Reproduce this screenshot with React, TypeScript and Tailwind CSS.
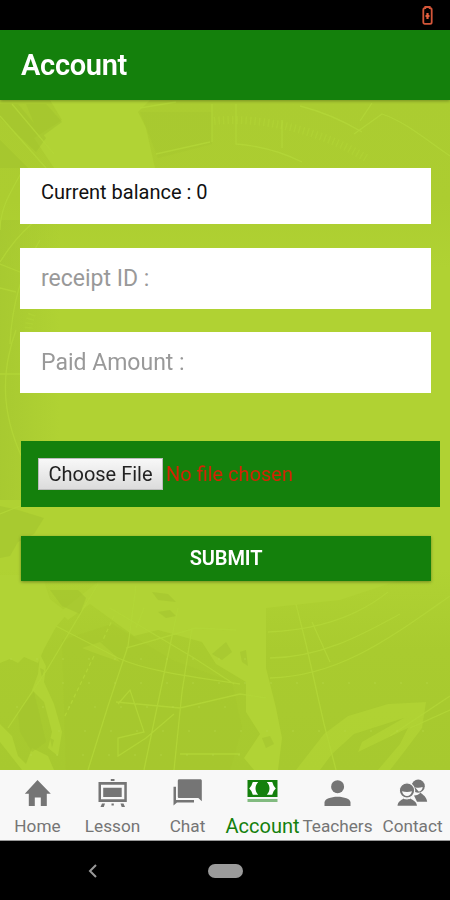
import type { ReactNode } from "react";

function Backdrop() {
    return (
        <svg
            className="absolute inset-0 w-full h-full"
            viewBox="0 100 450 670"
            preserveAspectRatio="none"
            fill="none"
            aria-hidden="true"
        >
            <defs>
                <linearGradient id="base" x1="0" y1="0" x2="0" y2="1">
                    <stop offset="0" stopColor="#abcc31" />
                    <stop offset="0.15" stopColor="#accd30" />
                    <stop offset="0.25" stopColor="#b0d233" />
                    <stop offset="0.7" stopColor="#b0d233" />
                    <stop offset="0.82" stopColor="#a9cb2f" />
                    <stop offset="1" stopColor="#a7c92f" />
                </linearGradient>
                <linearGradient id="edge" x1="0" y1="0" x2="1" y2="0">
                    <stop offset="0" stopColor="#a4c630" stopOpacity="0.7" />
                    <stop offset="1" stopColor="#a4c630" stopOpacity="0" />
                </linearGradient>
            </defs>
            <rect y="100" width="450" height="670" fill="url(#base)" />
            <rect y="220" width="60" height="280" fill="url(#edge)" />

            <g fill="#b1d335">
                <path d="M50 100H150L138 112l8 16 9 40H54L34 138l28-18z" />
                <path d="M0 575h42l8 24 18 14-12 14-12 22-6 14-14-6-6 6-8-4-10 4z" />
                <path d="M100 580h300l-60 20-74 8v60l10 40 6 30-4 32h-24l-10-12 16-24-14-22v-30l-30-18-14-22-44-12-24 6-44-32-22 16-8-8z" />
                <path d="M82 648l18-6 16 14 4 6-28-10zM40 654l6 12-2 16 10 22 8 28-4 24-10-8 4-16-8-30-12-12 6-16zM0 724l12 12 6 20 8 8 6-16 16 8 6 14H22L0 742z" />
                <path d="M324 734l24-18 40-12 38-2-4 26-18 24-14 18h-12l22-26 8-16-50 24 4-10 42-24-50 16-22 20-12 16h-24z" opacity="0.8" />
            </g>

            <g fill="#a2c42f" opacity="0.55">
                <path d="M0 104h18l28 34-10 14L0 118zM26 104h20l16 18-22 16zM0 140l28 28H0z" />
                <path d="M0 506l18 4 26 8-10 16-16 8-8 14-10 2zM50 590l28 0 8 8-6 16-18-8zM18 712l16-20 12 50-14 10-12-20z" />
                <path d="M140 112h72v32l-54 14z" opacity="0.4" />
                <path d="M152 592l16 2 8 8-18-2zM158 612l12-2 6 6-10 2zM212 654l14-12 6 10-10 8zM240 652l6-2 2 16-6-4zM262 738l8-2 4 8-8 4zM50 738l4 2-2 8zM40 668l4 2-2 8z" />
                <path d="M62 640l50-16 60 36 60 22 10 46-12 42H66z" opacity="0.35" />
            </g>

            <g stroke="#b3d638" strokeWidth="1.300" opacity="0.85">
                <path d="M0 116l46 52M12 104l42 50M140 108l36-6M156 154l54-12M212 104v38M236 104v40c25 2 46 8 66 18M300 106c24 6 42 14 62 26M354 134l28-20c24 8 44 26 68 42M282 120v28M372 103l-12 18" />
                <path d="M0 262C20 230 40 214 70 200M24 168C8 196 0 210 0 230M40 240c-18 30-28 62-30 104M0 264l20 8M0 288l16 4M0 374h20M16 330c-18 50-12 92 10 136M0 514l20-8" />
                <path d="M98 584L48 668 8 728M136 586l-8 60-20 60-20 64M144 608l-8 20M178 608l-14 66-20 96M192 628l-10 64-8 78M56 626l62 32c30 14 84 20 122 26M110 608l84 50 40 26M126 648l70-20 40 2M116 702l64 6 60-14 26 4M118 704l12-14 14 42-26 6 0 18 28-18 28-24" />
                <path d="M296 604l10 40 18 80 12 46M312 622l18 40M268 632c50-2 90-16 120-40M270 658c54 0 100-28 130-44M270 678c70-2 120-40 180-82M180 754h60M390 736l60-40M410 728l40-18" />
                <path d="M94 656L64 718M114 616l-12 26" strokeDasharray="4 3" />
            </g>
            <path
                d="M214 121C260 116 320 130 366 158M32 314C26 330 28 342 34 370"
                stroke="#b3d638"
                strokeWidth="8"
                strokeDasharray="1.500 3"
                opacity="0.45"
            />
            <g stroke="#b9da4a" strokeWidth="1.500" strokeDasharray="2 24" opacity="0.4">
                <path d="M10 659h250M62 683h370M16 707h230M58 731h380M30 755h230" />
            </g>
        </svg>
    );
}

function TabIcon({ children }: { children: ReactNode }) {
    return (
        <svg className="mt-2 shrink-0" width="31" height="31" viewBox="0 0 31 31" fill="currentColor">
            {children}
        </svg>
    );
}

const tabs = [
    {
        name: "Home",
        icon: <path d="M15.5 2 28.8 15.7h-4V28h-6v-8.5h-6V28h-6V15.7h-4z" />,
    },
    {
        name: "Lesson",
        icon: (
            <>
                <path d="M1.5 4h28.3v20H1.5zM4 6.8v14.4h23.3V6.8z" fillRule="evenodd" />
                <path d="M6.2 9.7h18.5V19H6.2zM13.8 1h3.7v2h-3.7zM5 25.5h3L6.8 29H3.5zM23.5 25.5h3l1.5 3.5h-3.3zM14.5 25.5h2.3v2h-2.3z" />
            </>
        ),
    },
    {
        name: "Chat",
        icon: (
            <>
                <path d="M7.300 1.300h21c1 0 1.500.6 1.500 1.500v20.500L26.300 20h-19c-1 0-1.500-.5-1.500-1.500V2.800c0-.9.500-1.500 1.500-1.500z" />
                <path d="M1.500 8.700h2.500V22h18v2.500H5L1.500 27.500z" />
            </>
        ),
    },
    {
        name: "Account",
        icon: (
            <>
                <path d="M.5 2h30v17H.5z" />
                <path d="M5.800 4h5.400c-3.600 3.500-3.600 9.200 0 12.700H5.800L4.300 13 2.200 10.400 4.300 7.700zM25.200 4h-5.400c3.600 3.500 3.600 9.200 0 12.700h5.400l1.500-3.700 2.100-2.600-2.100-2.700z" fill="#fff" />
                <path d="M.5 21h30v3H.5z" fill="#82bb80" />
            </>
        ),
    },
    {
        name: "Teachers",
        icon: (
            <>
                <circle cx="15.6" cy="8.7" r="6.5" />
                <path d="M2.5 28v-3.5c0-3.5 6.500-5.700 13-5.700s13 2.200 13 5.700V28z" />
            </>
        ),
    },
    {
        name: "Contact",
        icon: (
            <>
                <circle cx="21.2" cy="8.2" r="6.6" />
                <path d="M17 17.500c3 0 5-1 6.500-3 2.500 2.500 6 4 6.700 9.200H20z" />
                <path d="M18 9.300c2.500.8 5 .6 7.700-.2-.4 2.900-1.900 4.500-4 4.500z" fill="#f8f8f8" />
                <circle cx="10" cy="12.500" r="7.700" stroke="#f8f8f8" strokeWidth="1.200" />
                <path d="M5 13.200c3.300 1 6.700 1 10 0-.6 3.200-2.600 4.800-5 4.800s-4.400-1.600-5-4.800z" fill="#f8f8f8" />
                <path d="M.5 27.700c.5-4.500 3.500-5.200 6-7.200 1.500 1.200 5.500 1.200 7 0 2.500 2 6 2.700 6.500 7.200z" />
            </>
        ),
    },
];

export default function App() {
    return (
        <div className="w-[450px] h-[900px] flex flex-col overflow-hidden bg-black font-['Roboto',sans-serif]">
            <div className="h-[30px] shrink-0 flex justify-end pt-1.5 pr-[17px]">
                <svg width="11" height="19" viewBox="0 0 11 19" fill="none">
                    <path
                        d="M3.3 2V1h4.4v1c1.3 0 2 .6 2 1.800v12.400c0 1-.6 1.600-1.600 1.600H2.900c-1 0-1.600-.6-1.600-1.600V3.800C1.300 2.600 2 2 3.300 2z"
                        stroke="#d45639"
                        strokeWidth="1.8"
                    />
                    <path d="M5.5 7v6M3.500 10h4" stroke="#e5603f" strokeWidth="2.200" />
                </svg>
            </div>

            <header className="relative z-10 h-[70px] shrink-0 flex items-center pl-[21px] pt-0.5 bg-[#14800c] shadow-[0_1px_3px_rgba(0,0,0,0.3)]">
                <h1 className="text-white text-[29px] font-semibold tracking-[-0.3px]">Account</h1>
            </header>

            <main className="relative h-[670px] shrink-0">
                <Backdrop />
                <form className="relative flex flex-col pl-5 pt-[68px]">
                    <div className="w-[411px] h-14 bg-white pl-[21px] pt-2 text-[20px] leading-8 text-[#111]">
                        Current balance : 0
                    </div>
                    <input
                        className="w-[411px] h-[61px] mt-6 bg-white px-[21px] text-[23px] placeholder:text-[#999]"
                        placeholder="receipt ID :"
                    />
                    <input
                        className="w-[411px] h-[61px] mt-[23px] bg-white px-[21px] text-[23px] placeholder:text-[#999]"
                        placeholder="Paid Amount :"
                    />
                    <div className="w-[419px] h-[66px] ml-px mt-12 flex items-center pl-[17px] bg-[#14800c] text-[20px]">
                        <button
                            type="button"
                            className="w-[125px] h-8 shrink-0 border border-[#bbb] bg-linear-to-b from-[#f8f8f8] to-[#dcdcdc] text-[#222] whitespace-nowrap"
                        >
                            Choose File
                        </button>
                        <span className="ml-[3px] text-[#d42404] whitespace-nowrap">No file chosen</span>
                    </div>
                    <button
                        type="button"
                        className="w-[410px] h-[45px] ml-px mt-[29px] pb-0.5 bg-[#14800c] text-white text-[20px] font-semibold tracking-[-0.1px] shadow-[0_1px_3px_rgba(0,0,0,0.35)]"
                    >
                        SUBMIT
                    </button>
                </form>
            </main>

            <nav className="h-[71px] shrink-0 grid grid-cols-6 bg-[#f8f8f8] border-b border-[#999]">
                {tabs.map((tab) => (
                    <div
                        key={tab.name}
                        className={
                            tab.name === "Account"
                                ? "flex flex-col items-center text-[#14800c] text-[20px]"
                                : "flex flex-col items-center text-[#757575] text-[17.200px]"
                        }
                    >
                        <TabIcon>{tab.icon}</TabIcon>
                        <span className="mt-[5px] leading-6 whitespace-nowrap">{tab.name}</span>
                    </div>
                ))}
            </nav>

            <div className="h-[59px] shrink-0 flex items-center pl-[88px] gap-[111px]">
                <svg width="9" height="14" viewBox="0 0 9 14" fill="none" stroke="#999" strokeWidth="2">
                    <path d="M8 1 2 7l6 6" />
                </svg>
                <div className="w-[35px] h-3.5 rounded-full bg-[#9b9b9b]" />
            </div>
        </div>
    );
}
